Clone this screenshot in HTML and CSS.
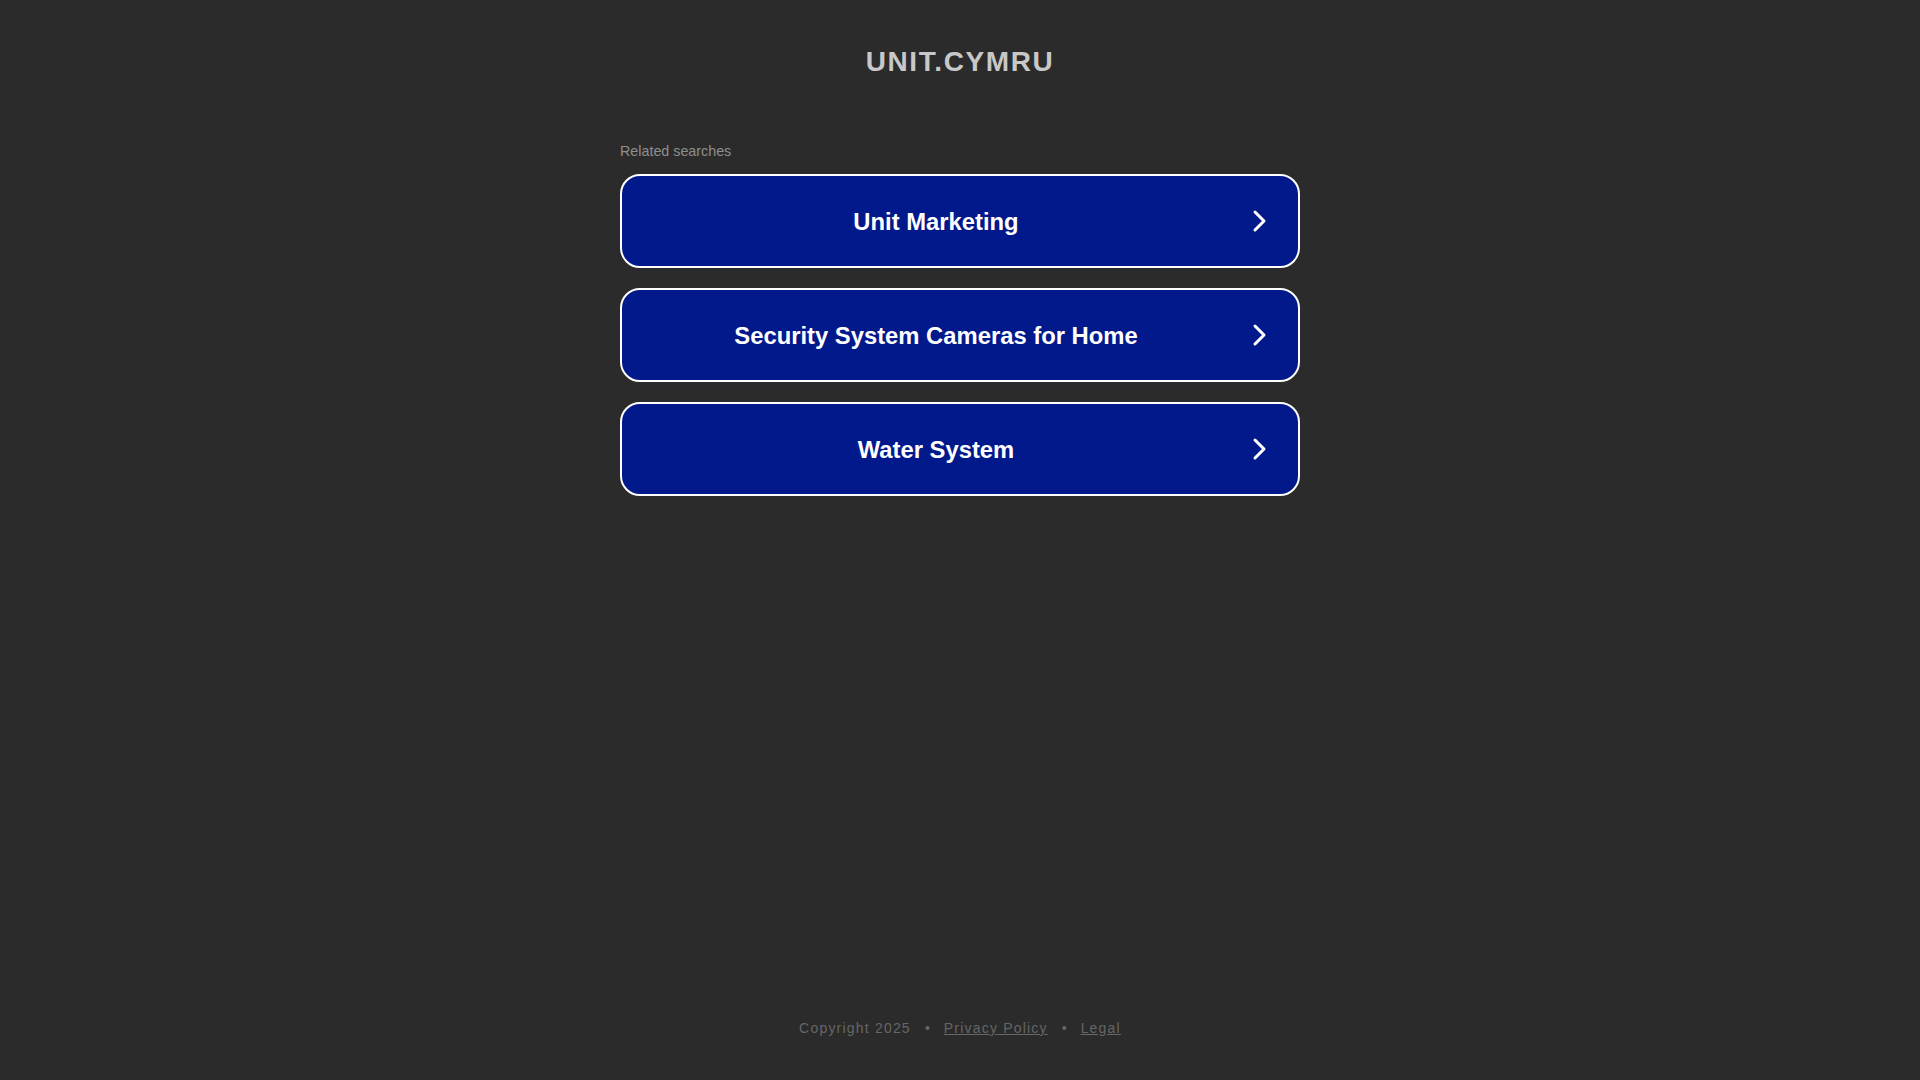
FILE: index.html
```html
<!DOCTYPE html>
<html lang="en">
<head>
<meta charset="utf-8">
<title>unit.cymru</title>
<link rel="stylesheet" href="styles.css">
</head>
<body>
<div class="page">
  <header class="header">
    <h1 class="domain">UNIT.CYMRU</h1>
  </header>
  <main class="content">
    <div class="related">Related searches</div>
    <div class="links">
      <a class="link-btn" href="#">
        <span class="link-text">Unit Marketing</span>
        <svg class="chev" width="16" height="24" viewBox="0 0 16 24"><path d="M3 3 L12 12 L3 21" fill="none" stroke="#fff" stroke-width="3" stroke-linecap="round" stroke-linejoin="round"/></svg>
      </a>
      <a class="link-btn" href="#">
        <span class="link-text">Security System Cameras for Home</span>
        <svg class="chev" width="16" height="24" viewBox="0 0 16 24"><path d="M3 3 L12 12 L3 21" fill="none" stroke="#fff" stroke-width="3" stroke-linecap="round" stroke-linejoin="round"/></svg>
      </a>
      <a class="link-btn" href="#">
        <span class="link-text">Water System</span>
        <svg class="chev" width="16" height="24" viewBox="0 0 16 24"><path d="M3 3 L12 12 L3 21" fill="none" stroke="#fff" stroke-width="3" stroke-linecap="round" stroke-linejoin="round"/></svg>
      </a>
    </div>
  </main>
  <footer class="footer">
    <span class="copy">Copyright 2025</span>
    <span class="dot">•</span>
    <a class="foot-link" href="#">Privacy Policy</a>
    <span class="dot">•</span>
    <a class="foot-link" href="#">Legal</a>
  </footer>
</div>
</body>
</html>
```

FILE: styles.css
```css
html, body {
  margin: 0;
  padding: 0;
  background: #2b2b2b;
}
body {
  font-family: "Liberation Sans", Arial, sans-serif;
}
.page {
  min-height: 100vh;
  display: flex;
  flex-direction: column;
}
.header {
  padding-top: 48px;
  text-align: center;
}
.domain {
  margin: 0;
  font-size: 28px;
  line-height: 28px;
  font-weight: bold;
  letter-spacing: 1.6px;
  color: #c8c8c8;
}
.content {
  width: 680px;
  margin: 68px auto 0;
}
.related {
  font-size: 14.3px;
  line-height: 14px;
  color: #8f8f8f;
  margin-bottom: 16px;
}
.links {
  display: flex;
  flex-direction: column;
  gap: 20px;
}
.link-btn {
  display: flex;
  align-items: center;
  height: 90px;
  border: 2px solid #ffffff;
  border-radius: 20px;
  background: #02198b;
  text-decoration: none;
  color: #ffffff;
  padding-right: 30px;
}
.link-text {
  flex: 1;
  text-align: center;
  font-size: 23.8px;
  font-weight: bold;
  margin-right: 2px;
  padding-top: 2px;
}
.chev {
  display: block;
  flex: none;
}
.footer {
  margin-top: auto;
  padding-bottom: 44px;
  display: flex;
  justify-content: center;
  align-items: center;
  gap: 14px;
  font-size: 14px;
  line-height: 15px;
  letter-spacing: 1.2px;
  color: #666666;
}
.foot-link {
  color: #666666;
  text-decoration: underline;
}
.dot {
  letter-spacing: 0;
}
```
